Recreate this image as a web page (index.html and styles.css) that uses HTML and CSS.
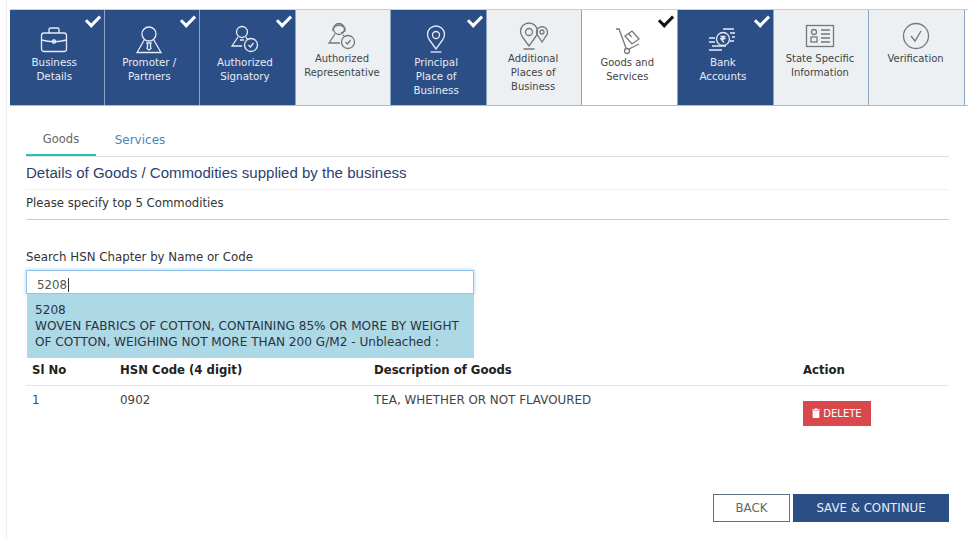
FILE: index.html
```html
<!DOCTYPE html>
<html lang="en">
<head>
  <meta charset="UTF-8" />
  <title>Goods and Services</title>
  <link rel="stylesheet" href="styles.css">
</head>
<body>
  <div class="page">
    <!-- Wizard steps -->
    <ul class="steps">
      <li class="step done">
        <svg class="step-icon" width="30" height="30" viewBox="0 0 30 30"><rect x="2.500" y="8" width="25" height="18.500" rx="2.500"/><path d="M10 8V4.500q0-1.500 1.500-1.500h7q1.500 0 1.500 1.500V8M2.500 15q12.500 3.500 25 0"/><rect x="13.500" y="15" width="3" height="3" rx="1"/></svg>
        <span>Business<br>Details</span>
      </li>
      <li class="step done">
        <svg class="step-icon" width="30" height="30" viewBox="0 0 30 30"><circle cx="15" cy="9" r="7"/><path d="M10.500 14.500 3 27.500h24l-7.500-13M13 18h4l-.7 2.500.7 3-2 1.500-2-1.500.7-3z"/></svg>
        <span>Promoter /<br>Partners</span>
      </li>
      <li class="step done">
        <svg class="step-icon" width="30" height="30" viewBox="0 0 30 30"><circle cx="12" cy="7" r="5.500"/><path d="M8 12 2 21h10M16 12l1.500 2.500M10 15h4"/><circle cx="21" cy="20" r="6.500"/><path d="m18.500 20 2 2 3-4"/></svg>
        <span>Authorized<br>Signatory</span>
      </li>
      <li class="step open">
        <svg class="step-icon" width="30" height="30" viewBox="0 0 30 30"><circle cx="12" cy="7" r="5.500"/><path d="M6 6q6-6 12 0M6 6v3M18 6v3l-4 2M8 12 2 21h11M16 13l1 1"/><circle cx="21" cy="20" r="6.500"/><path d="m18.500 20 2 2 3-4"/></svg>
        <span>Authorized<br>Representative</span>
      </li>
      <li class="step done">
        <svg class="step-icon" width="30" height="30" viewBox="0 0 30 30"><path d="M15 24 8.500 15a8.500 8.500 0 1 1 13 0z"/><circle cx="15" cy="10" r="3.500"/><path d="M9.500 27h11"/></svg>
        <span>Principal<br>Place of<br>Business</span>
      </li>
      <li class="step open">
        <svg class="step-icon" width="30" height="30" viewBox="0 0 30 30"><path d="M11 24 4.500 15a8.500 8.500 0 1 1 13 0z"/><circle cx="11" cy="10" r="3.500"/><path d="M5.500 27h11M24 20l-4-6a5.500 5.500 0 1 1 8 0z"/><circle cx="24" cy="10" r="2"/></svg>
        <span>Additional<br>Places of<br>Business</span>
      </li>
      <li class="step current">
        <svg class="step-icon" width="30" height="30" viewBox="0 0 30 30"><path d="M4 3h3l7 19"/><circle cx="15" cy="25" r="2.500"/><path d="m17 23 10-5M13 10l7-5 7 8-7 5z"/><path d="m16.500 7.500 3 3.500"/></svg>
        <span>Goods and<br>Services</span>
      </li>
      <li class="step done">
        <svg class="step-icon" width="30" height="30" viewBox="0 0 30 30"><circle cx="15" cy="14" r="6.500"/><path d="M12.500 11.500h5M12.500 13.500h5M13 11.500q3 0 2.500 2.500H13l3 3.500M15 4h11M22 8h5M24 12h3M22 16h4M1 13h6M1 17h6M4 21h14M1 25h13"/></svg>
        <span>Bank<br>Accounts</span>
      </li>
      <li class="step open">
        <svg class="step-icon" width="30" height="30" viewBox="0 0 30 30"><rect x="1.500" y="3.500" width="27" height="21"/><circle cx="9" cy="10" r="2.500"/><rect x="6" y="15" width="6" height="5"/><path d="M16 8h9M16 12h9M16 16h9M16 20h9"/></svg>
        <span>State Specific<br>Information</span>
      </li>
      <li class="step open">
        <svg class="step-icon" width="30" height="30" viewBox="0 0 30 30"><circle cx="15" cy="14" r="12.500"/><path d="m10 14 4 5 6-10"/></svg>
        <span>Verification</span>
      </li>
    </ul>

    <div class="content">
      <!-- Tabs -->
      <div class="tabs">
        <a class="tab active">Goods</a>
        <a class="tab">Services</a>
      </div>

      <h2 class="heading">Details of Goods / Commodities supplied by the business</h2>
      <p class="hint">Please specify top 5 Commodities</p>

      <div class="search">
        <label class="search-label">Search HSN Chapter by Name or Code</label>
        <div class="search-input">5208<i class="caret"></i></div>
        <div class="suggest">5208<br>WOVEN FABRICS OF COTTON, CONTAINING 85% OR MORE BY WEIGHT OF COTTON, WEIGHING NOT MORE THAN 200 G/M2 - Unbleached :</div>
      </div>

      <table class="goods">
        <thead>
          <tr><th class="col-no">Sl No</th><th class="col-code">HSN Code (4 digit)</th><th class="col-desc">Description of Goods</th><th>Action</th></tr>
        </thead>
        <tbody>
          <tr>
            <td class="no">1</td><td>0902</td><td>TEA, WHETHER OR NOT FLAVOURED</td>
            <td><button class="btn-delete"><svg width="8" height="10" viewBox="0 0 8 10"><path fill="#fff" d="M0 1.500h2.500V.5h3v1H8v1H0zM.7 3h6.600v6a1 1 0 0 1-1 1H1.700a1 1 0 0 1-1-1z"/></svg>DELETE</button></td>
          </tr>
        </tbody>
      </table>

      <div class="actions">
        <button class="btn-back">BACK</button>
        <button class="btn-save">SAVE &amp; CONTINUE</button>
      </div>
    </div>
  </div>
</body>
</html>
```

FILE: styles.css
```css
/* Reset */
* { margin: 0; padding: 0; box-sizing: border-box; }
html, body { height: 100%; overflow: hidden; }
body { background: #fff; color: #333; font-family: 'DejaVu Sans', Verdana, sans-serif; font-size: 11.8px; }

.page { margin-left: 6px; height: 538px; padding-top: 9px; border-left: 1px solid #eee; }

/* Wizard steps */
.steps { list-style: none; display: grid; grid-template-columns: 94.5px repeat(9, 95.6px); height: 97px; margin-left: 3px; border-top: 1px solid #c3d0da; border-bottom: 1px solid #a9bdcd; }
.step { position: relative; display: flex; flex-direction: column; align-items: center; text-align: center; font-size: 10px; line-height: 14px; border-right: 1px solid #8ca7bf; }
.step-icon { fill: none; stroke: currentColor; stroke-width: 1.3; flex: none; }
.step.done { background: #2c4e86; color: #e6ecf4; padding: 15px 5px 0 0; font-size: 10.3px; }
.step.open { background: #ecf0f3; color: #444; padding: 12px 2px 0 0; }
.step.current { background: #fff; color: #444; padding: 16px 5px 0 0; }
.step.open .step-icon, .step.current .step-icon { stroke: #777; }
.step.done::after, .step.current::after { content: ''; position: absolute; top: 5px; right: 4px; width: 11px; height: 6px; border-left: 3px solid #fff; border-bottom: 3px solid #fff; transform: rotate(-45deg); }
.step.current::after { border-color: #111; }

/* Content */
.content { padding: 0 19px 0 19px; }

.tabs { display: flex; height: 51px; padding-top: 24px; border-bottom: 1px solid #ddd; }
.tab { width: 70px; height: 26px; text-align: center; font-size: 11.5px; line-height: 18px; color: #666; }
.tab.active { border-bottom: 2px solid #27c1b8; }
.tab:not(.active) { margin-left: 9px; color: #4a86b8; font-size: 12px; line-height: 20px; }

.heading { height: 33px; font: 400 15.05px/32px 'Liberation Sans', Arial, sans-serif; color: #2c3f73; border-bottom: 1px solid #f0f0f0; }
.hint { height: 30px; font-size: 11.7px; line-height: 26px; border-bottom: 1px solid #ccc; }

.search { position: relative; height: 138px; padding-top: 30px; }
.search-label { display: block; height: 20px; line-height: 14px; }
.search-input { width: 448px; height: 24px; padding-left: 10px; font-size: 11.8px; line-height: 28px; color: #555; border: 1px solid #8fc4ec; box-shadow: 0 0 4px rgba(102,175,233,.6); }
.caret { display: inline-block; width: 1px; height: 14px; margin-left: 1px; vertical-align: -3px; background: #333; }
.suggest { position: absolute; top: 74px; left: 1px; width: 447px; height: 64px; padding: 8px 8px; background: #add8e6; font-size: 12.1px; line-height: 16px; color: #2b3440; }

/* Table */
.goods { width: 100%; border-collapse: collapse; table-layout: fixed; }
.goods th { height: 27px; padding-bottom: 3px; text-align: left; font-size: 11.7px; color: #222; border-bottom: 1px solid #e6e6e6; }
.goods td { padding-top: 7px; vertical-align: top; font-size: 11.9px; color: #444; }
.goods td.no { color: #2c4e86; padding-left: 6px; }
.goods th:first-child { padding-left: 6px; }
.col-no { width: 94px; }
.col-code { width: 254px; }
.col-desc { width: 429px; }

.btn-delete { display: flex; align-items: center; gap: 3px; justify-content: center; width: 68px; height: 25px; margin-top: 8px; border: 0; background: #d9484d; color: #fff; font: 10px 'DejaVu Sans', Verdana, sans-serif; }

.actions { display: flex; justify-content: flex-end; gap: 3px; margin-top: 68px; }
.actions button { height: 28px; padding-top: 1px; font-family: 'DejaVu Sans', Verdana, sans-serif; font-size: 11.8px; }
.btn-back { width: 77px; background: #fff; color: #666; border: 1px solid #5d7286; }
.btn-save { width: 156px; background: #2c4e86; color: #e6ecf4; border: 0; }
```
